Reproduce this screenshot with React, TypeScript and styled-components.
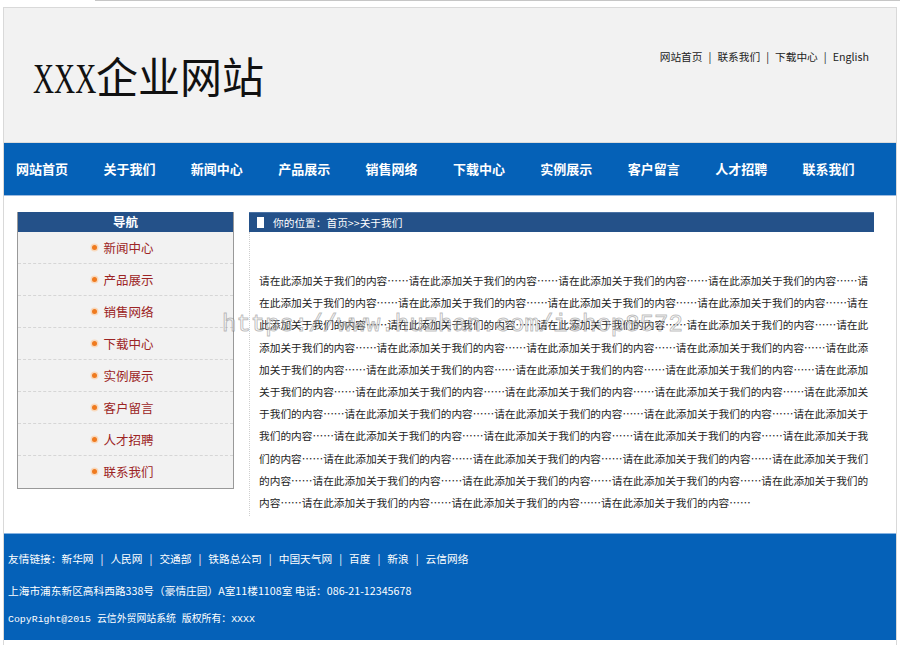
import styled, { createGlobalStyle } from "styled-components";

const GlobalStyle = createGlobalStyle`
  html, body {
    margin: 0;
    padding: 0;
    background: #fff;
  }
  body {
    font-family: "Noto Sans CJK SC", "Noto Sans", sans-serif;
    color: #333;
  }
  a {
    color: inherit;
    text-decoration: none;
  }
`;

const topLinks = ["网站首页", "联系我们", "下载中心", "English"];
const navItems = [
  "网站首页",
  "关于我们",
  "新闻中心",
  "产品展示",
  "销售网络",
  "下载中心",
  "实例展示",
  "客户留言",
  "人才招聘",
  "联系我们",
];
const sideItems = navItems.slice(2);
const friendLinks = ["新华网", "人民网", "交通部", "铁路总公司", "中国天气网", "百度", "新浪", "云信网络"];

const aboutText = "请在此添加关于我们的内容……".repeat(44);

const App = () => {
  return (
    <>
      <GlobalStyle />
      <TopRule />
      <Wrapper>
        <Header>
          <Logo>
            <LogoLatin>XXX</LogoLatin>企业网站
          </Logo>
          <TopLinks>
            {topLinks.map((item, i) => (
              <span key={item}>
                {i > 0 && <Sep>|</Sep>}
                <a href="#">{item}</a>
              </span>
            ))}
          </TopLinks>
        </Header>

        <Nav>
          {navItems.map((item) => (
            <NavItem key={item} href="#">
              {item}
            </NavItem>
          ))}
        </Nav>

        <Main>
          <Sidebar>
            <PanelTitle>导航</PanelTitle>
            {sideItems.map((item, i) => (
              <SideItem key={item} last={i === sideItems.length - 1}>
                <Dot />
                <a href="#">{item}</a>
              </SideItem>
            ))}
          </Sidebar>

          <Content>
            <Crumb>
              <CrumbIcon />
              你的位置：首页&gt;&gt;关于我们
            </Crumb>
            <Body>
              <Text>{aboutText}</Text>
            </Body>
          </Content>

          {/* watermark stamped over the screenshot */}
          <Watermark>https://www.huzhan.com/ishop8572</Watermark>
        </Main>

        <Footer>
          <FooterLine>
            友情链接：
            {friendLinks.map((item, i) => (
              <span key={item}>
                {i > 0 && <FootSep>|</FootSep>}
                <a href="#">{item}</a>
              </span>
            ))}
          </FooterLine>
          <FooterLine gap={10}>
            上海市浦东新区高科西路338号（豪情庄园）A室11楼1108室 电话：086-21-12345678
          </FooterLine>
          <FooterLine gap={7} mono>
            CopyRight@2015 云信外贸网站系统 版权所有：XXXX
          </FooterLine>
        </Footer>
      </Wrapper>
    </>
  );
};

export default App;

const TopRule = styled.div`
  height: 1px;
  margin-left: 95px;
  background: #c6c6c6;
  margin-bottom: 6px;
`;

const Wrapper = styled.div`
  width: 892px;
  margin-left: 3px;
  border: 1px solid #d9d9d9;
  border-bottom: none;
  height: 637px;
  overflow: hidden;
`;

const Header = styled.div`
  height: 134px;
  background: #f2f2f2;
  display: flex;
  justify-content: space-between;
  align-items: flex-start;
  padding: 0 27px 0 29px;
  border-bottom: 1px solid #dcdcdc;
`;

const Logo = styled.h1`
  margin: 46px 0 0;
  font-family: "Noto Sans CJK SC", serif;
  font-weight: normal;
  font-size: 42px;
  line-height: 42px;
  color: #111;
  white-space: nowrap;
`;

const LogoLatin = styled.span`
  display: inline-block;
  width: 63px;
  font-family: "Liberation Serif", serif;
  font-size: 43px;
  transform: scaleX(0.68);
  transform-origin: left center;
  overflow: visible;
`;

const TopLinks = styled.div`
  margin-top: 42px;
  font-size: 10.7px;
  line-height: 14px;
  color: #222;
  white-space: nowrap;
`;

const Sep = styled.span`
  margin: 0 6px;
`;

const Nav = styled.nav`
  height: 52px;
  background: #0561b7;
  display: flex;
  align-items: center;
  border-bottom: 1px solid #9dbbe0;
`;

const NavItem = styled.a`
  width: 87.4px;
  flex: none;
  box-sizing: border-box;
  padding-left: 12px;
  color: #fff;
  font-size: 13px;
  font-weight: bold;
  line-height: 52px;
  white-space: nowrap;
`;

const Main = styled.div`
  position: relative;
  display: flex;
  align-items: flex-start;
  gap: 15px;
  padding: 16px 21px 17px 13px;
  background: #fff;
`;

const Sidebar = styled.div`
  width: 215px;
  flex: none;
  border: 1px solid #999;
  border-top: none;
  background: #f2f2f2;
`;

const PanelTitle = styled.div`
  height: 20px;
  background: #245189;
  color: #fff;
  font-size: 12.5px;
  font-weight: bold;
  line-height: 19px;
  text-align: center;
`;

const SideItem = styled.div<{ last?: boolean }>`
  height: 31px;
  display: flex;
  align-items: center;
  justify-content: center;
  gap: 6px;
  border-bottom: ${({ last }) => (last ? "1px solid transparent" : "1px dashed #d6d6d6")};
  color: #9c2424;
  font-size: 12.5px;
  padding-right: 5px;
`;

const Dot = styled.span`
  width: 5px;
  height: 5px;
  border-radius: 50%;
  background: #ef7a1e;
  box-shadow: 0 0 0 1.5px #f8d9bd;
`;

const Content = styled.div`
  width: 625px;
  flex: none;
`;

const Crumb = styled.div`
  height: 19px;
  background: #245189;
  border-top: 1px solid #4a72a4;
  display: flex;
  align-items: center;
  gap: 9px;
  padding-left: 8px;
  color: #fff;
  font-size: 10.7px;
`;

const CrumbIcon = styled.span`
  width: 7px;
  height: 11px;
  background: #fff;
`;

const Body = styled.div`
  border-left: 1px dotted #cfcfcf;
  padding: 38px 3px 2px 9px;
`;

const Text = styled.p`
  margin: 0;
  width: 612px;
  font-size: 10.7px;
  line-height: 22.2px;
  color: #222;
  word-break: break-all;
`;

const Watermark = styled.div`
  position: absolute;
  left: 218px;
  top: 116px;
  font-family: "Liberation Mono", monospace;
  font-size: 24px;
  line-height: 26px;
  color: rgba(255, 255, 255, 0.35);
  -webkit-text-stroke: 1px rgba(110, 110, 110, 0.45);
  pointer-events: none;
  white-space: nowrap;
`;

const Footer = styled.footer`
  height: 107px;
  box-sizing: border-box;
  background: #0561b8;
  border-top: 1px solid #86b3e2;
  padding: 14px 4px 0;
  color: #fff;
`;

const FooterLine = styled.div<{ gap?: number; mono?: boolean }>`
  margin-top: ${({ gap }) => gap ?? 0}px;
  font-family: ${({ mono }) =>
    mono ? `"Liberation Mono", "Noto Sans CJK SC", monospace` : `"Noto Sans CJK SC", sans-serif`};
  font-size: ${({ mono }) => (mono ? "9.9px" : "10.7px")};
  line-height: 22px;
  white-space: nowrap;
`;

const FootSep = styled.span`
  margin: 0 7px;
`;
